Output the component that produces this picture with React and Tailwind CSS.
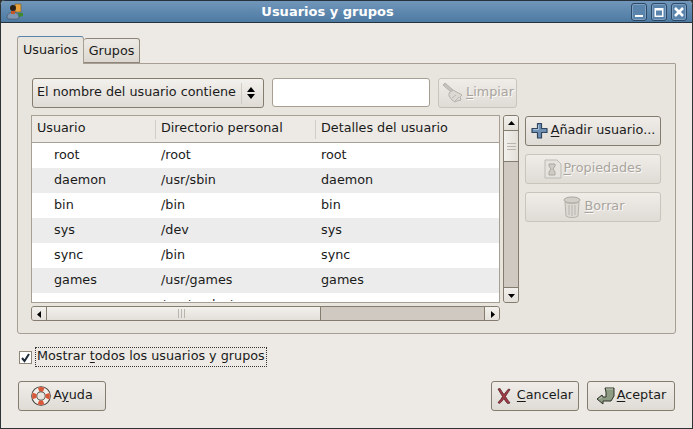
import React from 'react';

const rows = [
    ['root', '/root', 'root'],
    ['daemon', '/usr/sbin', 'daemon'],
    ['bin', '/bin', 'bin'],
    ['sys', '/dev', 'sys'],
    ['sync', '/bin', 'sync'],
    ['games', '/usr/games', 'games'],
    ['man', '/var/cache/man', 'man'],
];

const BrushIcon = () => (
    <svg width="24" height="22" viewBox="0 0 24 22">
        <path d="M2 3l2-2 8 7-2 2z" fill="#c6c3bd" stroke="#b5b2ac" />
        <path d="M8 11l4-3 9 5-2 2 1 3-4 1-2 1-3-2-3-4z" fill="#dcd9d3" stroke="#b5b2ac" />
        <path d="M11 16l4-3M14 19l4-4" stroke="#bdbab4" />
    </svg>
);

const PlusIcon = () => (
    <svg width="18" height="18" viewBox="0 0 18 18">
        <path d="M6.500 1.500h4v5h5.500v4h-5.500v5.500h-4v-5.500H1v-4h5.500z" fill="#6f8fb3" stroke="#2f4560" strokeWidth="1.200" strokeLinejoin="round" />
        <path d="M7.500 3v4.500H2.500" fill="none" stroke="#a9c0d9" />
    </svg>
);

const SheetIcon = () => (
    <svg width="18" height="20" viewBox="0 0 18 20">
        <path d="M1 1h12l4 4v14H1z" fill="#e6e3de" stroke="#bdbab4" />
        <path d="M5 5h6v2l-2 3 2 3v3H5v-3l2-3-2-3z" fill="#cfccc6" stroke="#aaa7a1" />
    </svg>
);

const TrashIcon = () => (
    <svg width="20" height="24" viewBox="0 0 20 24">
        <ellipse cx="10" cy="5" rx="8" ry="3" fill="#d2cfc9" stroke="#aaa7a1" />
        <path d="M3 7l1 14c2 2 10 2 12 0l1-14c-3 2-11 2-14 0z" fill="#dcd9d3" stroke="#b5b2ac" />
        <path d="M7 10v10M10 10v11M13 10v10" stroke="#b5b2ac" />
    </svg>
);

const HelpIcon = () => (
    <svg width="20" height="20" viewBox="0 0 20 20">
        <circle cx="10" cy="10" r="6.800" fill="none" stroke="#3f3f3b" strokeWidth="6" />
        <circle cx="10" cy="10" r="6.800" fill="none" stroke="#f1efe9" strokeWidth="4.200" />
        <circle cx="10" cy="10" r="6.800" fill="none" stroke="#d9583a" strokeWidth="4.200" strokeDasharray="5.340 5.340" strokeDashoffset="2.700" />
    </svg>
);

const CancelIcon = () => (
    <svg width="14" height="16" viewBox="0 0 14 16">
        <path d="M1 1l2-.5c1 2 2.500 4 4 6 1.500-2 3-4 4.500-5.500l1.500.5C11.500 4 9.500 6.500 8.500 8.500c1 2 3 4.500 4.500 6.500l-2.500.5C9 14 8 12.500 7 10.500 5.500 12.500 4 14.500 2.500 15.500L1 14.500C3 12.500 4.500 10.500 5.500 8.500 4 6 2.500 3.500 1 1z" fill="#a33a45" stroke="#54252a" strokeWidth="0.800" />
    </svg>
);

const AcceptIcon = () => (
    <svg width="20" height="20" viewBox="0 0 20 20">
        <path d="M9 2h9v8l-3 5H7v3l-6-5 5-4 1 2h3l0-5z" fill="#8d9b83" stroke="#2e3328" strokeLinejoin="round" />
        <path d="M10 3h7M3 13l3-2" stroke="#b9c4b0" />
    </svg>
);

const Button = ({ icon, children, disabled, className = '', textClass = 'mt-[-2px]' }) => (
    <div
        className={`flex items-center justify-center whitespace-nowrap rounded-[3px] border bg-gradient-to-b from-[#f0ede9] to-[#dfdbd5] ${
            disabled ? 'border-[#c9c4bc] text-[#a8a49d] [text-shadow:1px_1px_0_#fbfaf8]' : 'border-[#857c70] text-[#1a1a1a]'
        } ${className}`}
    >
        {icon}
        <span className={textClass}>{children}</span>
    </div>
);

const U = ({ children }) => <span className="underline underline-offset-2">{children}</span>;

const ArrowBtn = ({ d, className = '' }) => (
    <div className={`flex h-[15px] w-[15px] shrink-0 items-center justify-center border-[#857c70] bg-gradient-to-b from-[#f3f1ed] to-[#e3dfd9] ${className}`}>
        <svg width="9" height="9" viewBox="0 0 9 9">
            <path d={d} fill="#000" />
        </svg>
    </div>
);

export default function App() {
    return (
        <div className="h-[429px] w-[693px] bg-[#2e3436]">
            <div className="flex h-[429px] w-[693px] flex-col overflow-hidden rounded-t-[5px] border-x border-b border-[#2e3436] bg-[#edeae5] font-['DejaVu_Sans',sans-serif] text-[12.75px] leading-none text-[#1a1a1a]">
                {/* Title bar */}
                <div className="flex h-[23px] shrink-0 items-center border-t border-b border-[#26333f] bg-gradient-to-b from-[#7196ba] to-[#4d7aa2] pl-[5px] pr-[5px]">
                    <svg width="18" height="18" viewBox="0 0 18 18" className="shrink-0">
                        <rect x="9" y="1" width="6" height="8" fill="#e8a13c" stroke="#6d5a2c" strokeWidth="0.600" />
                        <path d="M12 10l5 0 0 3-4 1z" fill="#3d8a2f" />
                        <circle cx="7" cy="5" r="3" fill="#2b2118" />
                        <path d="M1 15c0-4 3-6 6-6s6 2 6 6l-2 1H3z" fill="#7d96b2" stroke="#40505f" strokeWidth="0.600" />
                        <rect x="5" y="8" width="4" height="3" fill="#c4562a" />
                    </svg>
                    <div className="flex-1 text-center text-[13px] font-bold text-white">Usuarios y grupos</div>
                    <div className="flex gap-[4px]">
                        {[
                            <path key="a" d="M3 10h8v2H3z" fill="#fff" />,
                            <path key="b" d="M2.500 3h9v9h-9zM4 5.500V10.500h6V5.500z" fill="#fff" fillRule="evenodd" />,
                            <path key="c" d="M3 3l8 8M11 3l-8 8" stroke="#fff" strokeWidth="2.600" />,
                        ].map((g, i) => (
                            <div key={i} className="flex h-[18px] w-[16px] items-center justify-center rounded-[3px] border border-[#2c4a68] bg-[#5a84ab] shadow-[inset_0_0_0_1px_#7fa0c0]">
                                <svg width="14" height="14" viewBox="0 0 14 14">{g}</svg>
                            </div>
                        ))}
                    </div>
                </div>

                <div className="flex flex-1 flex-col px-4 pt-[12px]">
                    {/* Tabs */}
                    <div className="z-10 ml-0 flex h-[28px] shrink-0 items-end">
                        <div className="mb-[-1px] flex h-[28px] w-[67px] items-start justify-center rounded-t-[3px] border-x border-t border-x-[#a89f94] border-t-[#5a84ab] bg-[#e8e4de] pt-[7px]">
                            Usuarios
                        </div>
                        <div className="flex h-[25px] w-[56px] items-start justify-center rounded-t-[3px] border border-l-0 border-[#8f867a] bg-gradient-to-b from-[#edeae5] to-[#dcd8d1] pt-[6px]">
                            Grupos
                        </div>
                    </div>

                    {/* Panel */}
                    <div className="flex h-[271px] w-[659px] shrink-0 flex-col rounded-b-[3px] rounded-tr-[1px] border border-[#a89f94] bg-[#e8e4de] pl-[13px] pt-[14px]">
                        <div className="flex items-start">
                            <div className="ml-px flex h-[30px] w-[232px] items-center whitespace-nowrap rounded-[3px] border border-[#857c70] bg-gradient-to-b from-[#f3f1ed] to-[#dfdbd5] pl-[4px]">
                                <span className="mt-[-1px] flex-1">El nombre del usuario contiene</span>
                                <span className="h-[21px] border-l border-[#cfcac3]" />
                                <svg width="20" height="14" viewBox="0 0 20 14" className="mr-px">
                                    <path d="M9 1l4 5H5zM9 13l-4-5h8z" fill="#000" />
                                </svg>
                            </div>
                            <div className="ml-2 h-[29px] w-[158px] rounded-[3px] border border-[#a89f94] bg-white" />
                            <Button
                                disabled
                                icon={<BrushIcon />}
                                textClass="mt-[-1px]"
                                className="ml-2 h-[30px] w-[79px] gap-[1px]"
                            >
                                <U>L</U>impiar
                            </Button>
                        </div>

                        <div className="mt-[7px] flex">
                            {/* Tree + scrollbars */}
                            <div className="flex h-[206px] w-[472px] shrink-0 flex-wrap content-start">
                                <div className="h-[188px] w-[469px] overflow-hidden border border-[#a89f94] bg-white">
                                    <div className="flex h-[27px] items-center border-b border-[#a89f94] bg-[#edeae5]">
                                        <div className="flex h-[19px] w-[124px] items-center border-r border-[#d2cdc6] pb-px pl-[5px]">Usuario</div>
                                        <div className="flex h-[19px] w-[160px] items-center border-r border-[#d2cdc6] pb-px pl-[5px]">Directorio personal</div>
                                        <div className="pb-px pl-[5px]">Detalles del usuario</div>
                                    </div>
                                    {/* list is cut just above the x-height of the 7th row */}
                                    <div className="h-[158px] overflow-hidden">
                                        {rows.map((r, i) => (
                                            <div key={r[0]} className={`flex h-[25px] items-center pb-px ${i % 2 ? 'bg-[#ececec]' : 'bg-white'}`}>
                                                <div className="w-[124px] pl-[22px]">{r[0]}</div>
                                                <div className="w-[160px] pl-[5px]">{r[1]}</div>
                                                <div className="pl-[5px]">{r[2]}</div>
                                            </div>
                                        ))}
                                    </div>
                                </div>
                                <div className="mt-[3px] flex h-[15px] w-[469px] overflow-hidden rounded-[3px] border border-[#857c70] bg-[#cfc9c1]">
                                    <ArrowBtn d="M6 1v7L2 4.500z" className="h-[13px] w-[13px] border-r" />
                                    <div className="flex w-[274px] items-center justify-center border-r border-[#857c70] bg-gradient-to-b from-[#f3f1ed] to-[#e3dfd9] pr-[4px]">
                                        <svg width="9" height="9" viewBox="0 0 9 9">
                                            <path d="M1.500 0v9M4.500 0v9M7.500 0v9" stroke="#b9b4ac" />
                                        </svg>
                                    </div>
                                    <div className="flex-1" />
                                    <ArrowBtn d="M3 1v7l4-3.500z" className="h-[13px] w-[13px] border-l" />
                                </div>
                            </div>

                            {/* Vertical scrollbar */}
                            <div className="flex h-[188px] w-[16px] shrink-0 flex-col overflow-hidden rounded-[3px] border border-[#857c70] bg-[#cfc9c1]">
                                <ArrowBtn d="M4.500 2L8 6H1z" className="h-[13px] w-[14px] border-b" />
                                <div className="flex h-[31px] items-center justify-center border-b border-[#857c70] bg-gradient-to-r from-[#f3f1ed] to-[#e3dfd9]">
                                    <svg width="9" height="9" viewBox="0 0 9 9">
                                        <path d="M0 1.500h9M0 4.500h9M0 7.500h9" stroke="#b9b4ac" />
                                    </svg>
                                </div>
                                <div className="flex-1" />
                                <ArrowBtn d="M1 3h7L4.500 7z" className="h-[13px] w-[14px] border-t" />
                            </div>

                            {/* Action buttons */}
                            <div className="ml-[6px] mt-px flex w-[136px] flex-col gap-2">
                                <Button icon={<PlusIcon />} className="h-[30px] gap-[2px]">
                                    <U>A</U>ñadir usuario...
                                </Button>
                                <Button disabled icon={<SheetIcon />} className="h-[30px] gap-[1px]">
                                    <U>P</U>ropiedades
                                </Button>
                                <Button disabled icon={<TrashIcon />} className="h-[30px] gap-[3px]">
                                    <U>B</U>orrar
                                </Button>
                            </div>
                        </div>
                    </div>

                    {/* Checkbox */}
                    <div className="mt-[13px] flex items-center pl-[2px]">
                        <div className="flex h-[13px] w-[13px] items-center justify-center border border-[#8f867a] bg-white">
                            <svg width="11" height="11" viewBox="0 0 11 11">
                                <path d="M2 6l2.500 3L9 2" fill="none" stroke="#1f2a38" strokeWidth="2" />
                            </svg>
                        </div>
                        <div className="ml-[3px] flex h-[20px] w-[232px] items-center whitespace-nowrap border border-dotted border-[#333] pb-px pl-px">
                            <span>Mostrar <U>t</U>odos los usuarios y grupos</span>
                        </div>
                    </div>

                    {/* Bottom buttons */}
                    <div className="mt-[14px] flex w-[658px] pl-px">
                        <Button icon={<HelpIcon />} className="h-[30px] w-[88px] gap-[2px]">
                            A<U>y</U>uda
                        </Button>
                        <div className="flex-1" />
                        <Button icon={<CancelIcon />} className="h-[30px] w-[88px] gap-[6px]">
                            <U>C</U>ancelar
                        </Button>
                        <Button icon={<AcceptIcon />} className="ml-2 h-[30px] w-[88px] gap-[1px]">
                            <U>A</U>ceptar
                        </Button>
                    </div>
                </div>
            </div>
        </div>
    );
}
